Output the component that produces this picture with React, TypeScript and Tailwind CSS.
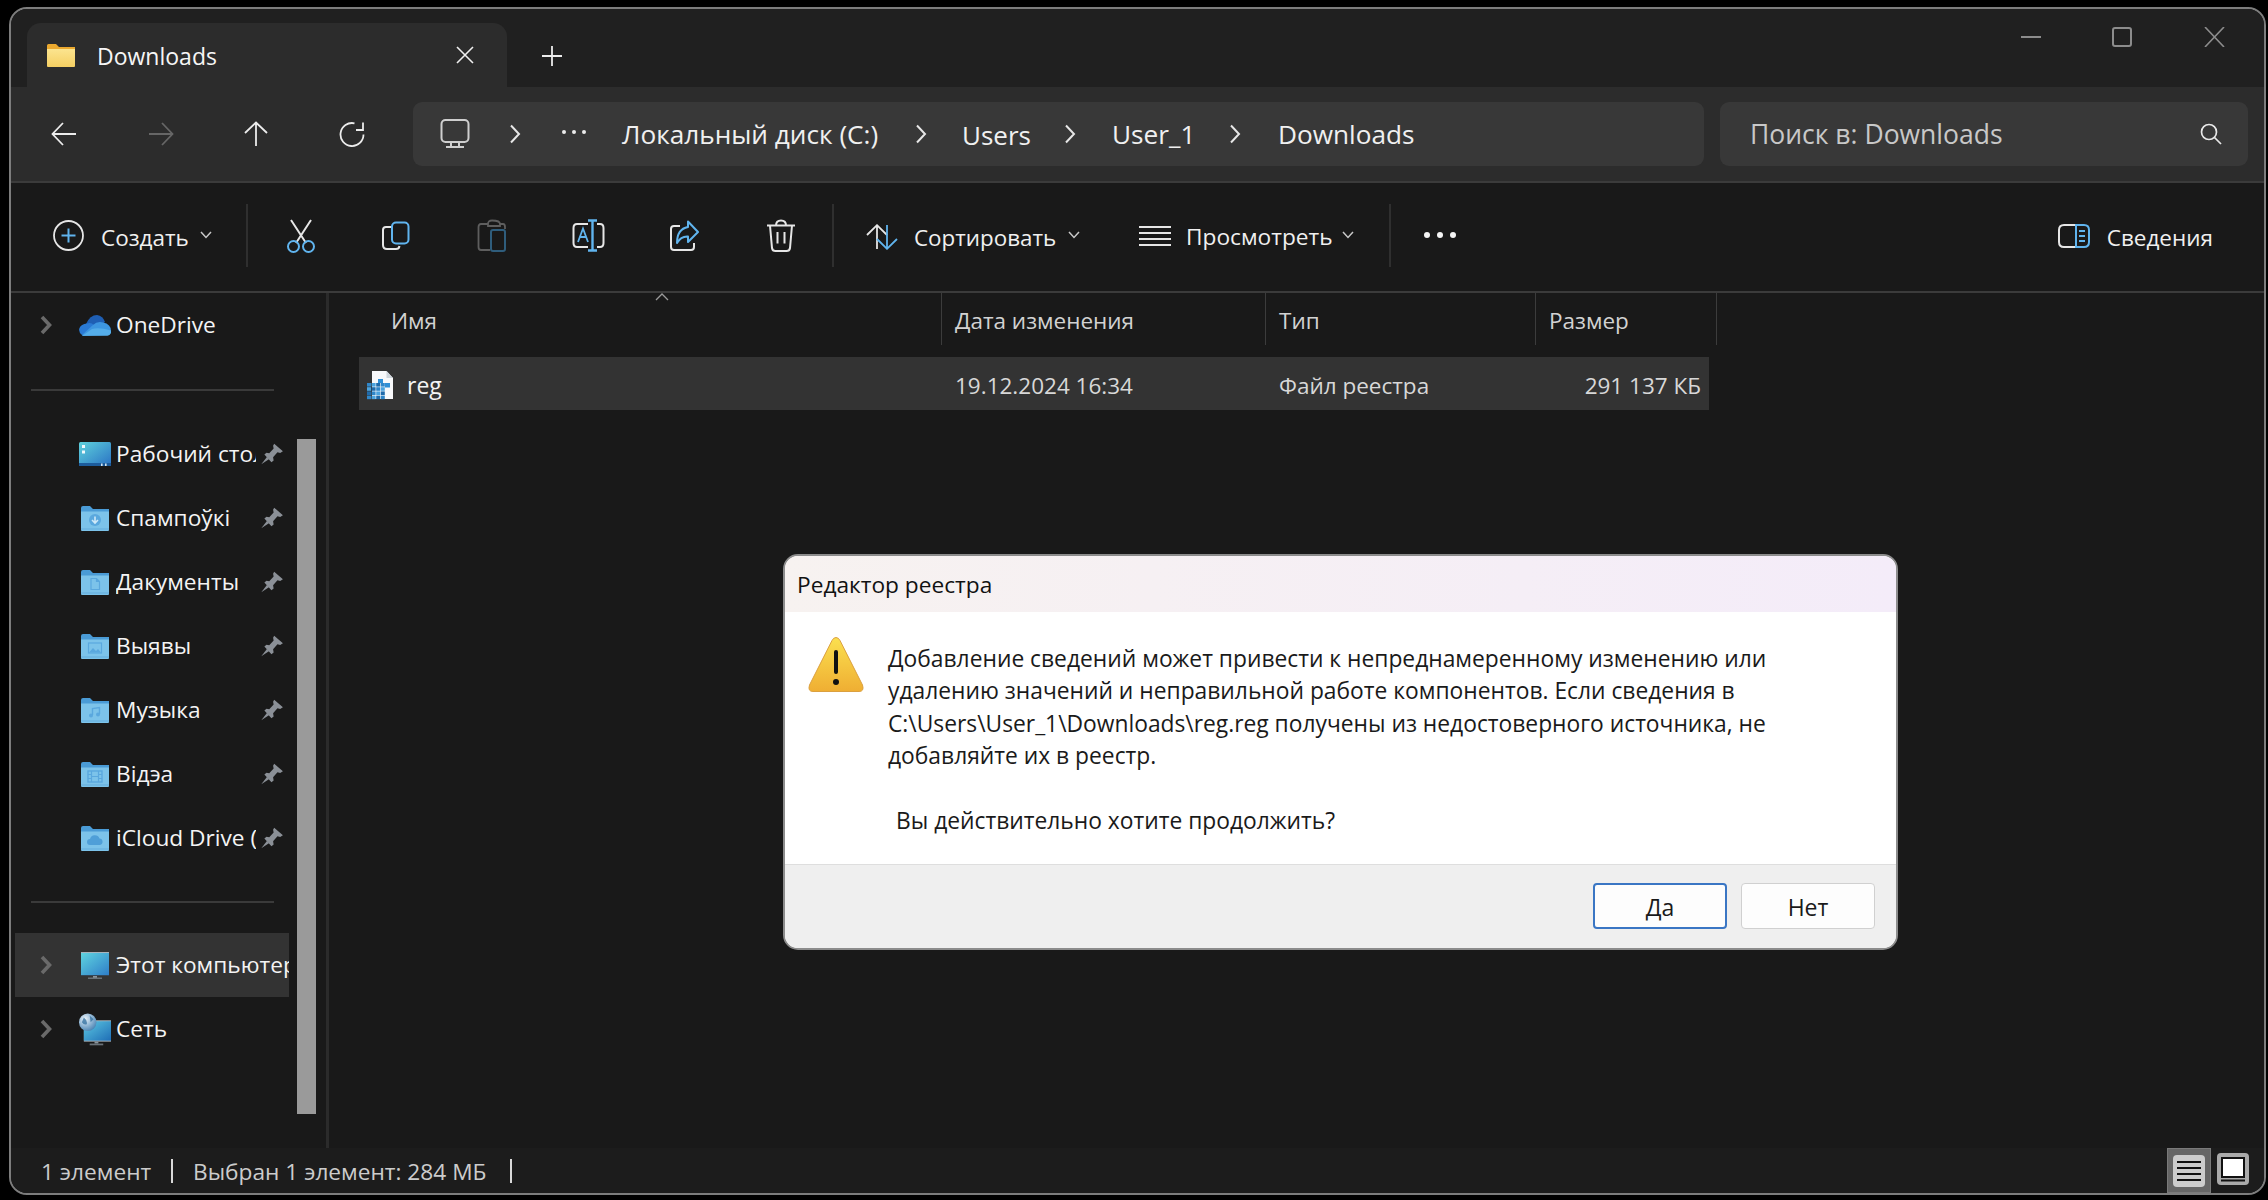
import React from "react";

const A = "#60b4ee";
const W = "#e6e6e6";

function Svg({ w, h, vb, children, className }: { w: number; h: number; vb?: string; children: React.ReactNode; className?: string }) {
  return (
    <svg width={w} height={h} viewBox={vb ?? `0 0 ${w} ${h}`} fill="none" className={className}>
      {children}
    </svg>
  );
}

const Chevron = ({ c = "#e6e6e6" }: { c?: string }) => (
  <Svg w={12} h={20}><path d="M2 1.5 L10 10 L2 18.5" stroke={c} strokeWidth="2" /></Svg>
);
const Caret = () => (
  <Svg w={12} h={8}><path d="M1 1 L6 6.5 L11 1" stroke="#c8c8c8" strokeWidth="1.5" /></Svg>
);
const NavChevron = () => (
  <Svg w={18} h={22}><path d="M3 3 L10.5 11 L3 19" stroke="#6a6a6a" strokeWidth="3.6" /></Svg>
);
const Pin = () => (
  <Svg w={24} h={24} vb="0 0 22 22">
    <path d="M13 1.5 L21 8.5 L18.5 10 L16 9.5 L12 14 L12.5 17 L10.5 18.5 L4 11.5 L6 9.8 L8.5 10.3 L12.5 6 L12 3.5 Z" fill="#8b9097" />
    <path d="M6.5 13.5 L1.2 20.5 L8.5 15.5 Z" fill="#8b9097" />
  </Svg>
);

function Folder({ kind }: { kind: string }) {
  const g = "#5aa8de";
  return (
    <Svg w={28} h={25}>
      <path d="M0 2 Q0 0 2 0 L9 0 L12 3 L28 3 L28 9 L0 9 Z" fill="#4a9bd6" />
      <path d="M0 5.5 L28 5.5 L28 24 Q28 25 27 25 L1 25 Q0 25 0 24 Z" fill="#7cc3ea" />
      <rect x="0" y="22.5" width="28" height="1" fill="#64aedc" />
      {kind === "down" && (<><circle cx="14" cy="14" r="6" fill={g} /><path d="M14 10.5 V16.5 M11 14 L14 17 L17 14" stroke="#cfe9f8" strokeWidth="1.6" /></>)}
      {kind === "doc" && <path d="M10 8.5 H15.5 L18.5 11.5 V19.5 H10 Z M15.5 8.5 V11.5 H18.5" stroke={g} strokeWidth="1.2" />}
      {kind === "pic" && (<><rect x="7.5" y="9" width="13" height="10" stroke={g} strokeWidth="1.2" /><path d="M8 18.5 L12 14 L15 17 L17 15 L20 18.5 Z" fill={g} /></>)}
      {kind === "music" && (
        <>
          <path d="M11.5 17 V10.5 L18.5 9.5 V16" stroke={g} strokeWidth="1.4" />
          <circle cx="10" cy="17.5" r="2" fill={g} />
          <circle cx="17" cy="16.5" r="2" fill={g} />
        </>
      )}
      {kind === "video" && (
        <>
          <rect x="7" y="9" width="14" height="11" stroke={g} strokeWidth="1.4" />
          <path d="M10.5 9 V20 M17.5 9 V20 M7 12.5 H10.5 M7 16.5 H10.5 M17.5 12.5 H21 M17.5 16.5 H21 M10.5 14.5 H17.5" stroke={g} strokeWidth="1.2" />
        </>
      )}
      {kind === "cloud" && <path d="M9 19 a3 3 0 0 1 0 -6 a5 5 0 0 1 9.5 -.5 a3.3 3.3 0 0 1 .5 6.5 Z" fill="#4f9fd8" />}
    </Svg>
  );
}

function DesktopIcon() {
  return (
    <Svg w={32} h={24}>
      <defs>
        <linearGradient id="dg" x1="0" y1="0" x2="1" y2="1">
          <stop offset="0" stopColor="#5fd2dc" />
          <stop offset="1" stopColor="#2a72c4" />
        </linearGradient>
      </defs>
      <rect width="32" height="24" rx="1.5" fill="url(#dg)" />
      <rect y="21" width="32" height="3" fill="#1d5c9c" />
      <rect x="3" y="3" width="3" height="3" fill="#f0f8fc" />
      <rect x="3" y="8.5" width="3" height="3" fill="#f0f8fc" />
      <rect x="22" y="21.5" width="1.6" height="2.5" fill="#cfe6f5" />
      <rect x="26" y="21.5" width="1.6" height="2.5" fill="#cfe6f5" />
    </Svg>
  );
}
function OneDriveIcon() {
  return (
    <Svg w={32} h={21}>
      <path d="M7 9 Q11 0 18 0 Q24 1 26 7 L15 15 Z" fill="#1f5fb4" />
      <path d="M3 20 Q-1 17 0.5 13 Q2 9 8 8.5 Q12 7 15 10 L20 16 Z" fill="#2a7ad4" />
      <path d="M14 10 Q18 6 24 7.5 Q32 9 32 16 Q32 19.5 29 20 L4 21 Q3 21 3 20 Z" fill="#3d96e0" />
      <path d="M3.5 20.8 L13 14 Q20 12 32 15.5 Q32.5 20 28.5 20.8 Z" fill="#54ade9" />
    </Svg>
  );
}
function PcIcon() {
  return (
    <Svg w={28} h={27}>
      <defs>
        <linearGradient id="pg" x1="0" y1="0" x2="1" y2="1">
          <stop offset="0" stopColor="#5fd4e0" />
          <stop offset="1" stopColor="#2f7ec8" />
        </linearGradient>
      </defs>
      <rect width="28" height="24" fill="#aab4bc" />
      <rect x="0" y="1" width="28" height="22" fill="url(#pg)" />
      <rect y="23" width="28" height="1" fill="#33475a" />
      <rect x="12" y="24" width="4" height="2" fill="#8a939b" />
      <rect x="7" y="25.5" width="14" height="1.5" fill="#6a7279" />
    </Svg>
  );
}
function NetIcon() {
  return (
    <Svg w={33} h={33}>
      <defs>
        <linearGradient id="ng" x1="0" y1="0" x2="1" y2="1">
          <stop offset="0" stopColor="#5cc8e2" />
          <stop offset="1" stopColor="#1f6eb6" />
        </linearGradient>
        <radialGradient id="gg" cx=".35" cy=".3" r=".8">
          <stop offset="0" stopColor="#e8f2fa" />
          <stop offset="1" stopColor="#3f7db0" />
        </radialGradient>
      </defs>
      <rect x="5" y="7" width="28" height="22" fill="#a8b4bc" />
      <rect x="5" y="8" width="28" height="20" fill="url(#ng)" />
      <rect x="16" y="29" width="4" height="2" fill="#8a939b" />
      <rect x="11" y="31" width="14" height="1.8" fill="#6a7279" />
      <circle cx="9" cy="9" r="9" fill="url(#gg)" />
      <path d="M5 4 Q9 7 8 11 Q5 12 3 9 Z M11 2 L15 6 L12 9 Z" fill="#2f6e9e" opacity=".75" />
    </Svg>
  );
}
function RegIcon() {
  const blues = ["#2f86c9", "#4aa3df", "#1f6bab"];
  return (
    <Svg w={27} h={29}>
      <path d="M5 0 H19.5 L26 7 V28 H5 Z" fill="#f8f9fb" />
      <path d="M19.5 0 L26 7 H19.5 Z" fill="#cfd6dc" />
      <g>
        {[0, 1, 2, 3].map((r) =>
          [0, 1, 2, 3].map((c) => (
            <rect key={`${r}-${c}`} x={0 + c * 4.6} y={12 + r * 4.2} width="4" height="3.6" fill={blues[(r + c) % 3]} />
          ))
        )}
        <rect x="11" y="8" width="5" height="4" fill="#2f8fd6" />
        <rect x="18" y="12" width="5" height="4.5" fill="#2f8fd6" />
      </g>
    </Svg>
  );
}
function Warning() {
  return (
    <Svg w={56} h={56}>
      <defs>
        <linearGradient id="wg" x1="0" y1="0" x2="0" y2="1">
          <stop offset="0" stopColor="#fbe04f" />
          <stop offset="1" stopColor="#efae33" />
        </linearGradient>
      </defs>
      <path d="M28 1.5 Q25.5 1.5 24 4.5 L1.5 49 Q-0.5 55.5 5 55.5 H51 Q56.5 55.5 54.5 49 L32 4.5 Q30.5 1.5 28 1.5 Z" fill="url(#wg)" stroke="#dba040" strokeWidth="1" />
      <rect x="26" y="14" width="4" height="24" rx="2" fill="#111" />
      <circle cx="28" cy="46" r="3" fill="#111" />
    </Svg>
  );
}

function ToolIcon({ name }: { name: string }) {
  switch (name) {
    case "cut":
      return (
        <Svg w={30} h={34}>
          <path d="M5 1 L20 24 M25 1 L10 24" stroke={W} strokeWidth="2" />
          <circle cx="7.5" cy="27.5" r="5.5" stroke={A} strokeWidth="2" />
          <circle cx="22.5" cy="27.5" r="5.5" stroke={A} strokeWidth="2" />
        </Svg>
      );
    case "copy":
      return (
        <Svg w={30} h={30}>
          <path d="M10 6 H5 Q2 6 2 9 V24 Q2 28 6 28 H15 Q18 28 18.5 25" stroke={W} strokeWidth="2" />
          <rect x="11" y="1.5" width="16.5" height="21" rx="4" stroke={A} strokeWidth="2" />
        </Svg>
      );
    case "paste":
      return (
        <Svg w={30} h={33}>
          <path d="M11 5 H4 Q1.5 5 1.5 8 V28 Q1.5 31 4 31 H13 M23 5 H26 Q28 5 28 8 V10 M11 5 Q11 1.5 15 1.5 Q23 1.5 23 5 V7 H11 Z" stroke="#5e5e5e" strokeWidth="1.8" />
          <rect x="14" y="11" width="14" height="21" rx="2" stroke="#2f5d7c" strokeWidth="2" />
        </Svg>
      );
    case "rename":
      return (
        <Svg w={33} h={33}>
          <path d="M16 5 H5 Q1.5 5 1.5 9 V24 Q1.5 28 5 28 H16 M25 5 H28 Q31.5 5 31.5 9 V24 Q31.5 28 28 28 H25" stroke={W} strokeWidth="2" />
          <path d="M16 1.5 H25 M16 31.5 H25 M20.5 1.5 V31.5" stroke={A} strokeWidth="2.4" />
          <path d="M6 23 L11 9.5 L16 23 M7.8 18 H14.2" stroke={A} strokeWidth="1.8" />
        </Svg>
      );
    case "share":
      return (
        <Svg w={30} h={32}>
          <path d="M11 6 H5 Q2 6 2 9 V27 Q2 30 5 30 H22 Q25 30 25 27 V23" stroke={W} strokeWidth="2" />
          <path d="M19 1.5 L29 12 L19 22 V16.5 Q12 16 8 23 Q8 9 19 7 Z" stroke={A} strokeWidth="2" strokeLinejoin="round" />
        </Svg>
      );
    case "del":
      return (
        <Svg w={30} h={33}>
          <path d="M1 6.5 H29 M10 6.5 Q10 1.5 15 1.5 Q20 1.5 20 6.5 M4 6.5 L6 29 Q6.5 32 9.5 32 H20.5 Q23.5 32 24 29 L26 6.5 M11.5 13 V24.5 M18.5 13 V24.5" stroke={W} strokeWidth="2" />
        </Svg>
      );
    default:
      return null;
  }
}

const Sep = () => <div className="h-[63px] w-[2px] shrink-0 bg-[#2f2f2f]" />;

const navRows = [
  { t: "Рабочий стол", k: "desk" },
  { t: "Спампоўкі", k: "down" },
  { t: "Дакументы", k: "doc" },
  { t: "Выявы", k: "pic" },
  { t: "Музыка", k: "music" },
  { t: "Відэа", k: "video" },
  { t: "iCloud Drive (", k: "cloud" },
];

function SideRow({ chevron, icon, text, pin, active }: { chevron?: boolean; icon: React.ReactNode; text: string; pin?: boolean; active?: boolean }) {
  return (
    <div className={`ml-[4px] flex h-[64px] w-[274px] items-center overflow-hidden ${active ? "bg-[#333333]" : ""}`}>
      <div className="flex w-[66px] shrink-0 justify-center">{chevron && <NavChevron />}</div>
      <div className="-ml-[2px] flex w-[32px] shrink-0 justify-center">{icon}</div>
      <div className={`ml-[5px] overflow-hidden whitespace-nowrap pt-[1px] text-[22.7px] text-[#f4f4f4] ${pin ? "w-[140px]" : "w-[173px]"}`}>{text}</div>
      {pin && <div className="ml-[4px] shrink-0"><Pin /></div>}
    </div>
  );
}

function Header({ text, w, pl }: { text: string; w: string; pl: string }) {
  return (
    <div className={`flex h-[52px] items-center border-r border-[#3c3c3c] pt-[4px] text-[22.5px] text-[#d2d2d2] ${w} ${pl}`}>{text}</div>
  );
}

export default function App() {
  return (
    <div className="h-[1200px] w-[2268px] overflow-hidden bg-black pl-[9px] pt-[7px] font-['Open_Sans','Noto_Sans',sans-serif]">
      <div className="relative flex h-[1188px] w-[2257px] flex-col overflow-hidden rounded-[18px] border-2 border-[#7d7d7d] bg-[#191919]">
        {/* Title bar */}
        <div className="flex h-[78px] shrink-0 items-end bg-[#202020] pl-[16px]">
          <div className="flex h-[64px] w-[480px] shrink-0 items-center rounded-t-[14px] bg-[#2c2c2c] pl-[20px]">
            <Svg w={28} h={23}>
              <defs>
                <linearGradient id="fy" x1="0" y1="0" x2="0" y2="1">
                  <stop offset="0" stopColor="#fbe48f" />
                  <stop offset="1" stopColor="#f5cf62" />
                </linearGradient>
              </defs>
              <path d="M0 1.5 Q0 0 1.5 0 H9 L12 3 H28 V8 H0 Z" fill="#eba92f" />
              <path d="M0 5 H28 V22 Q28 23 27 23 H1 Q0 23 0 22 Z" fill="url(#fy)" />
            </Svg>
            <span className="ml-[22px] pt-[2px] text-[23px] text-[#f6f6f6]">Downloads</span>
            <div className="ml-auto mr-[33px]">
              <Svg w={18} h={18}><path d="M1 1 L17 17 M17 1 L1 17" stroke="#f0f0f0" strokeWidth="1.6" /></Svg>
            </div>
          </div>
          <div className="mb-[21px] ml-[35px]">
            <Svg w={20} h={20}><path d="M10 0 V20 M0 10 H20" stroke="#ececec" strokeWidth="1.8" /></Svg>
          </div>
          <div className="mb-[40px] ml-auto flex items-center pr-[39px]">
            <Svg w={20} h={2}><path d="M0 1 H20" stroke="#8c8c8c" strokeWidth="2" /></Svg>
            <div className="ml-[71px]"><Svg w={20} h={20}><rect x="1" y="1" width="18" height="18" rx="2" stroke="#8c8c8c" strokeWidth="2" /></Svg></div>
            <div className="ml-[72px]"><Svg w={21} h={20}><path d="M1 0 L20 20 M20 0 L1 20" stroke="#8c8c8c" strokeWidth="1.6" /></Svg></div>
          </div>
        </div>

        {/* Nav bar */}
        <div className="flex h-[96px] shrink-0 items-start border-b-2 border-[#3b3b3b] bg-[#2c2c2c] pl-[5px] pt-[15px]">
          <div className="flex h-[64px] w-[96px] items-center justify-center">
            <Svg w={26} h={24}><path d="M25 12 H2 M12 1 L1.5 12 L12 23" stroke="#ececec" strokeWidth="1.8" /></Svg>
          </div>
          <div className="flex h-[64px] w-[98px] items-center justify-center">
            <Svg w={26} h={24}><path d="M1 12 H24 M14 1 L24.5 12 L14 23" stroke="#666666" strokeWidth="1.8" /></Svg>
          </div>
          <div className="flex h-[64px] w-[92px] items-center justify-center">
            <Svg w={24} h={26}><path d="M12 25 V2 M1 12 L12 1.5 L23 12" stroke="#ececec" strokeWidth="1.8" /></Svg>
          </div>
          <div className="flex h-[64px] w-[100px] items-center justify-center">
            <Svg w={26} h={26}>
              <path d="M15.5 2.3 A11.5 11.5 0 1 0 24.5 13.5" stroke="#ececec" strokeWidth="1.8" />
              <path d="M24 1.5 V9 H17" stroke="#ececec" strokeWidth="1.8" />
            </Svg>
          </div>
          <div className="ml-[11px] flex h-[64px] w-[1291px] items-center rounded-[9px] bg-[#383838]">
            <div className="ml-[27px] flex w-[30px] justify-center">
              <Svg w={30} h={30}>
                <rect x="1.5" y="1" width="27" height="22" rx="4" stroke="#cfcfcf" strokeWidth="2" />
                <path d="M11 23 V27 M19 23 V27 M6 28 H24" stroke="#cfcfcf" strokeWidth="2" />
              </Svg>
            </div>
            <div className="ml-[39px] flex w-[12px] justify-center"><Chevron /></div>
            <div className="ml-[41px] flex w-[24px] items-center justify-between pb-[4px]">
              {[0, 1, 2].map((i) => <div key={i} className="h-[4px] w-[4px] rounded-full bg-[#ececec]" />)}
            </div>
            <span className="ml-[36px] w-[258px] whitespace-nowrap pt-[2px] text-[26.2px] text-[#f0f0f0]">Локальный диск (C:)</span>
            <div className="ml-[35px] flex w-[12px] justify-center"><Chevron /></div>
            <span className="ml-[35px] w-[66px] pt-[2px] text-[26px] text-[#f0f0f0]">Users</span>
            <div className="ml-[36px] flex w-[12px] justify-center"><Chevron /></div>
            <span className="ml-[36px] w-[80px] pt-[2px] text-[26.2px] text-[#f0f0f0]">User_1</span>
            <div className="ml-[37px] flex w-[12px] justify-center"><Chevron /></div>
            <span className="ml-[37px] pt-[2px] text-[26.2px] text-[#f0f0f0]">Downloads</span>
          </div>
          <div className="ml-[16px] flex h-[64px] w-[528px] items-center rounded-[9px] bg-[#383838] pl-[30px] pr-[26px]">
            <span className="pt-[2px] text-[26.5px] text-[#c8c8c8]">Поиск в: Downloads</span>
            <div className="ml-auto">
              <Svg w={22} h={22}><circle cx="9" cy="9" r="7.5" stroke="#e8e8e8" strokeWidth="1.7" /><path d="M14.5 14.5 L21 21" stroke="#e8e8e8" strokeWidth="1.7" /></Svg>
            </div>
          </div>
        </div>

        {/* Toolbar */}
        <div className="flex h-[110px] shrink-0 items-center border-b-2 border-[#3b3b3b] bg-[#191919] pb-[3px] pl-[42px]">
          <Svg w={31} h={31}>
            <circle cx="15.5" cy="15.5" r="14.5" stroke={W} strokeWidth="1.8" />
            <path d="M15.5 8.5 V22.5 M8.5 15.5 H22.5" stroke={A} strokeWidth="2" />
          </Svg>
          <span className="ml-[17px] w-[86px] pt-[4px] text-[22.5px] text-[#f0f0f0]">Создать</span>
          <div className="ml-[13px] w-[12px] pb-[2px]"><Caret /></div>
          <div className="ml-[34px]"><Sep /></div>
          <div className="flex w-[100px] justify-center pl-[6px]"><ToolIcon name="cut" /></div>
          <div className="flex w-[95px] justify-center"><ToolIcon name="copy" /></div>
          <div className="flex w-[98px] justify-center"><ToolIcon name="paste" /></div>
          <div className="flex w-[94px] justify-center"><ToolIcon name="rename" /></div>
          <div className="flex w-[98px] justify-center"><ToolIcon name="share" /></div>
          <div className="flex w-[95px] justify-center"><ToolIcon name="del" /></div>
          <div className="ml-[4px]"><Sep /></div>
          <div className="ml-[32px] pt-[2px]">
            <Svg w={32} h={26}>
              <path d="M11 25 V2 M1 11 L11 1.2 L21 11" stroke={W} strokeWidth="1.8" />
              <path d="M21 1 V24 M11 15 L21 24.8 L31 15" stroke={A} strokeWidth="1.8" />
            </Svg>
          </div>
          <span className="ml-[16px] w-[142px] pt-[4px] text-[22.4px] text-[#f0f0f0]">Сортировать</span>
          <div className="ml-[12px] w-[12px] pb-[2px]"><Caret /></div>
          <div className="ml-[59px]">
            <Svg w={32} h={20}><path d="M0 1 H32 M0 7 H32 M0 13 H32 M0 19 H32" stroke={W} strokeWidth="2" /></Svg>
          </div>
          <span className="ml-[15px] w-[144px] pt-[4px] text-[22.7px] text-[#f0f0f0]">Просмотреть</span>
          <div className="ml-[12px] w-[12px] pb-[2px]"><Caret /></div>
          <div className="ml-[35px]"><Sep /></div>
          <div className="ml-[33px] flex w-[32px] items-center justify-between pb-[2px]">
            {[0, 1, 2].map((i) => <div key={i} className="h-[6px] w-[6px] rounded-full bg-[#f4f4f4]" />)}
          </div>
          <div className="ml-auto flex items-center pr-[51px]">
            <Svg w={32} h={24}>
              <path d="M18 1 H6 Q1 1 1 6 V18 Q1 23 6 23 H18" stroke={W} strokeWidth="2" />
              <path d="M18 1 H26 Q31 1 31 6 V18 Q31 23 26 23 H18 Z" stroke={A} strokeWidth="2" />
              <path d="M21 7 H27 M21 12 H27 M21 17 H27" stroke={A} strokeWidth="2.2" />
            </Svg>
            <span className="ml-[17px] pt-[4px] text-[22.5px] text-[#f0f0f0]">Сведения</span>
          </div>
        </div>

        {/* Main */}
        <div className="flex min-h-0 flex-1">
          <div className="flex w-[278px] shrink-0 flex-col">
            <SideRow chevron icon={<OneDriveIcon />} text="OneDrive" />
            <div className="flex h-[65px] items-center pl-[20px]"><div className="h-[2px] w-[243px] bg-[#3a3a3a]" /></div>
            {navRows.map((r) => (
              <SideRow key={r.t} pin text={r.t} icon={r.k === "desk" ? <DesktopIcon /> : <Folder kind={r.k} />} />
            ))}
            <div className="flex h-[63px] items-center pl-[20px]"><div className="h-[2px] w-[243px] bg-[#3a3a3a]" /></div>
            <SideRow chevron active icon={<PcIcon />} text="Этот компьютер" />
            <SideRow chevron icon={<NetIcon />} text="Сеть" />
          </div>
          <div className="ml-[8px] mt-[146px] h-[675px] w-[19px] shrink-0 bg-[#9a9a9a]" />
          <div className="ml-[10px] w-[3px] shrink-0 bg-[#2b2b2b]" />
          <div className="relative min-w-0 flex-1">
            <div className="absolute left-[326px] top-[0px]">
              <Svg w={14} h={8}><path d="M1 7 L7 1 L13 7" stroke="#9a9a9a" strokeWidth="1.3" /></Svg>
            </div>
            <div className="flex">
              <Header text="Имя" w="w-[613px]" pl="pl-[62px]" />
              <Header text="Дата изменения" w="w-[324px]" pl="pl-[13px]" />
              <Header text="Тип" w="w-[270px]" pl="pl-[13px]" />
              <Header text="Размер" w="w-[181px]" pl="pl-[13px]" />
            </div>
            <div className="ml-[30px] mt-[12px] flex h-[53px] w-[1350px] items-center bg-[#333333] pt-[4px] text-[22.5px] text-[#d8d8d8]">
              <div className="flex w-[583px] items-center pl-[8px]">
                <RegIcon />
                <span className="ml-[13px] text-[23px] text-[#f4f4f4]">reg</span>
              </div>
              <div className="w-[324px] pl-[13px]">19.12.2024 16:34</div>
              <div className="w-[270px] pl-[13px]">Файл реестра</div>
              <div className="w-[165px] text-right">291 137 КБ</div>
            </div>
          </div>
        </div>

        {/* Status bar */}
        <div className="flex h-[45px] shrink-0 items-center bg-[#1c1c1c] pl-[30px] text-[22.7px] text-[#cccccc]">
          <span className="w-[130px] whitespace-nowrap pt-[3px]">1 элемент</span>
          <div className="h-[24px] w-[2px] bg-[#d8d8d8]" />
          <span className="ml-[20px] w-[317px] whitespace-nowrap pt-[3px]">Выбран 1 элемент: 284 МБ</span>
          <div className="h-[24px] w-[2px] bg-[#d8d8d8]" />
          <div className="ml-auto flex h-full items-center pr-[15px]">
            <div className="flex h-[45px] w-[44px] items-center justify-center border border-[#7a7a7a] bg-[#666666]">
              <Svg w={32} h={32}>
                <rect width="32" height="32" rx="4" fill="#cccccc" />
                <path d="M4 7 H28 M4 13 H28 M4 19 H28 M4 25 H28" stroke="#111111" strokeWidth="2" />
              </Svg>
            </div>
            <div className="mb-[4px] ml-[6px]">
              <Svg w={32} h={32}>
                <rect width="32" height="32" rx="4" fill="#aaaaaa" />
                <rect x="4" y="4" width="24" height="21" fill="#111111" />
                <rect x="6" y="6" width="20" height="17" fill="#ffffff" />
                <rect x="4" y="26.5" width="24" height="2" fill="#111111" />
              </Svg>
            </div>
          </div>
        </div>

        {/* Dialog */}
        <div className="absolute left-[772px] top-[545px] flex h-[396px] w-[1115px] flex-col overflow-hidden rounded-[15px] border-2 border-[#8c8c8c] bg-white text-[#1a1a1a]">
          <div className="flex h-[56px] shrink-0 items-center bg-gradient-to-r from-[#f7f2f0] to-[#f4ecf9] pl-[12px] pt-[2px] text-[22.7px] text-[#111]">Редактор реестра</div>
          <div className="flex flex-1 pl-[23px] pt-[24px]">
            <Warning />
            <div className="ml-[24px] pt-[7px] text-[22.8px] leading-[32.4px]">
              <div className="whitespace-nowrap">Добавление сведений может привести к непреднамеренному изменению или</div>
              <div className="whitespace-nowrap">удалению значений и неправильной работе компонентов. Если сведения в</div>
              <div className="whitespace-nowrap">C:\Users\User_1\Downloads\reg.reg получены из недостоверного источника, не</div>
              <div className="whitespace-nowrap">добавляйте их в реестр.</div>
              <div className="mt-[32px] whitespace-nowrap pl-[8px]">Вы действительно хотите продолжить?</div>
            </div>
          </div>
          <div className="flex h-[84px] shrink-0 items-start justify-end gap-[14px] border-t border-[#dedede] bg-[#efefef] pr-[21px] pt-[18px]">
            <div className="flex h-[46px] w-[134px] items-center justify-center rounded-[4px] border-2 border-[#3a76c4] bg-[#fdfdfd] pt-[2px] text-[23px]">Да</div>
            <div className="flex h-[46px] w-[134px] items-center justify-center rounded-[4px] border border-[#d0d0d0] bg-[#fdfdfd] pt-[2px] text-[23px]">Нет</div>
          </div>
        </div>
      </div>
    </div>
  );
}
